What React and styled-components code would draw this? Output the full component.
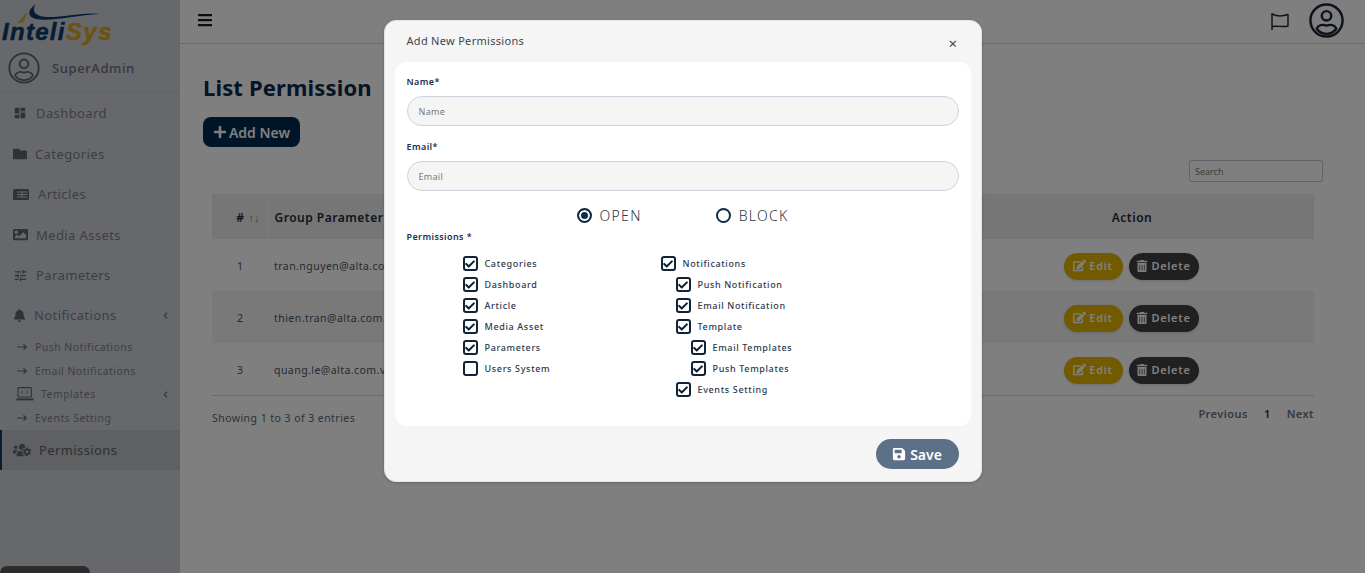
import React from "react";
import styled, { createGlobalStyle } from "styled-components";
import { FaBell, FaEdit, FaFolder, FaImage, FaPlus, FaSave, FaTrashAlt, FaUsersCog, FaBars, FaCheck, FaChevronLeft } from "react-icons/fa";
import { MdDashboard, MdTune } from "react-icons/md";
import { HiArrowNarrowRight } from "react-icons/hi";

const FONT = `"Noto Sans", "Open Sans", sans-serif`;

const GlobalStyle = createGlobalStyle`
    html, body {
        margin: 0;
        height: 100%;
        overflow: hidden;
        background: #fff;
        font-family: ${FONT};
    }
    * {
        box-sizing: border-box;
    }
`;

const Page = styled.div`
    display: flex;
    height: 573px;
    width: 1365px;
    position: relative;
    overflow: hidden;
`;

const Sidebar = styled.aside`
    width: 180px;
    flex: none;
    background: #cdd1d8;
    display: flex;
    flex-direction: column;
`;

const LogoBox = styled.div`
    height: 43px;
    flex: none;
`;

const LogoSvg = styled.svg`
    display: block;
    overflow: visible;
`;

const UserRow = styled.div`
    height: 50px;
    display: flex;
    align-items: center;
    gap: 12px;
    padding-left: 8px;
    border-bottom: 1px solid #bfc3ca;
    font-size: 13px;
    font-weight: 500;
    letter-spacing: 0.6px;
    color: #6a6f78;
`;

const Nav = styled.nav`
    display: flex;
    flex-direction: column;
`;

const NavItem = styled.div`
    height: ${(p) => p.$h || 40.5}px;
    display: flex;
    align-items: center;
    gap: ${(p) => p.$gap || 8}px;
    padding-left: 13px;
    padding-right: 11px;
    font-size: 13px;
    letter-spacing: 0.4px;
    color: #7a7f88;
    svg {
        flex: none;
        color: #5f646c;
    }
`;

const SubItem = styled(NavItem)`
    height: 23.7px;
    padding-left: 16px;
    font-size: 10.5px;
    gap: 7px;
    letter-spacing: 0.45px;
`;

const ActiveItem = styled(NavItem)`
    height: 40px;
    background: #bcc0c7;
    border-left: 2px solid #0d3a66;
    padding-left: 11px;
    gap: 8px;
    color: #5c6068;
`;

const Chevron = styled(FaChevronLeft)`
    margin-left: auto;
    color: #5a5f66;
`;

const Main = styled.main`
    flex: 1;
    min-width: 0;
    display: flex;
    flex-direction: column;
`;

const TopBar = styled.header`
    height: 44px;
    flex: none;
    border-bottom: 1px solid #d5d5d5;
    display: flex;
    align-items: center;
    padding: 0 21px 3px 17px;
    color: #111c2a;
`;

const TopRight = styled.div`
    margin-left: auto;
    display: flex;
    align-items: center;
    gap: 20px;
`;

const FlagSvg = styled.svg`
    margin-top: 3px;
`;

const Content = styled.div`
    padding: 28px 51px 0 23px;
`;

const Title = styled.h1`
    margin: 0;
    font-size: 22px;
    line-height: 30px;
    font-weight: 700;
    letter-spacing: 0.15px;
    color: #0b2a4a;
`;

const AddButton = styled.button`
    margin-top: 15px;
    width: 97px;
    height: 30px;
    border: none;
    border-radius: 8px;
    background: #022a50;
    color: #fff;
    display: flex;
    align-items: center;
    justify-content: center;
    gap: 2px;
    font-family: ${FONT};
    font-size: 14px;
    font-weight: 600;
`;

const SearchRow = styled.div`
    display: flex;
    justify-content: flex-end;
    margin: 13px -9px 12px 0;
`;

const SearchInput = styled.input`
    width: 134px;
    height: 22px;
    border: 1px solid #c9c9c9;
    border-radius: 2px;
    background: transparent;
    padding: 0 5px;
    font-family: ${FONT};
    font-size: 9px;
    &::placeholder {
        color: #777;
    }
`;

const TableWrap = styled.div`
    margin-left: 9px;
`;

const Table = styled.table`
    width: 1102px;
    border-collapse: collapse;
    table-layout: fixed;
    font-size: 10.5px;
    letter-spacing: 0.45px;
    color: #4a5564;
`;

const Th = styled.th`
    height: 45px;
    background: #ededed;
    border-bottom: 1px solid #fff;
    border-right: ${(p) => (p.$divider ? "1px solid #f4f4f4" : "none")};
    font-size: 12px;
    font-weight: 600;
    letter-spacing: 0.5px;
    color: #1d2a3d;
    text-align: ${(p) => p.$align || "left"};
    padding: 3px 7px 0;
    white-space: nowrap;
    overflow: hidden;
`;

const SortArrows = styled.span`
    color: #8a8f96;
    font-weight: 400;
    font-size: 11px;
    letter-spacing: 0;
    margin-left: 4px;
`;

const Tr = styled.tr`
    background: ${(p) => (p.$striped ? "#f2f2f2" : "transparent")};
`;

const Td = styled.td`
    height: 52px;
    padding: 1px 7px 0;
    text-align: ${(p) => p.$align || "left"};
    white-space: nowrap;
    overflow: hidden;
`;

const IdCell = styled(Td)`
    padding-left: 25px;
`;

const TableFoot = styled.div`
    border-top: 1px solid #d4d4d4;
    display: flex;
    justify-content: space-between;
    padding-top: 15px;
    font-size: 10.5px;
    letter-spacing: 0.45px;
    color: #5a6270;
`;

const Pager = styled.div`
    display: flex;
    gap: 16px;
    font-size: 11px;
    font-weight: 600;
    letter-spacing: 0.45px;
    color: #6a7484;
    margin-top: -5px;
`;

const PagerCurrent = styled.span`
    color: #2a2f3a;
`;

const ActionGroup = styled.div`
    display: inline-flex;
    gap: 6px;
    margin: 1px 0 0 -2px;
`;

const PillButton = styled.button`
    height: 27px;
    width: ${(p) => p.$w}px;
    border: none;
    border-radius: 14px;
    background: ${(p) => p.$bg};
    color: #fff;
    display: flex;
    align-items: center;
    justify-content: center;
    gap: 3px;
    padding: 0 0 1px;
    font-family: ${FONT};
    font-size: 11px;
    font-weight: 600;
    letter-spacing: 0.7px;
    box-shadow: 0 1px 3px rgba(0, 0, 0, 0.15);
`;

const Overlay = styled.div`
    position: absolute;
    inset: 0;
    background: rgba(0, 0, 0, 0.5);
    display: flex;
    justify-content: center;
    align-items: flex-start;
    padding-top: 20px;
`;

const Toast = styled.div`
    position: absolute;
    left: 0;
    bottom: 0;
    width: 90px;
    height: 7px;
    border-radius: 8px 8px 0 0;
    background: #2c2c2c;
`;

const Modal = styled.div`
    width: 598px;
    height: 462px;
    background: #f5f5f5;
    border: 1px solid #e3e3e3;
    border-radius: 12px;
    box-shadow: 0 1px 3px rgba(0, 0, 0, 0.2);
    display: flex;
    flex-direction: column;
    padding: 0 10px;
`;

const ModalHead = styled.div`
    height: 41px;
    flex: none;
    display: flex;
    align-items: center;
    justify-content: space-between;
    padding: 0 12px 3px;
    font-size: 11px;
    letter-spacing: 0.3px;
    color: #3e4650;
`;

const CloseMark = styled.span`
    font-size: 15px;
    line-height: 15px;
    color: #444;
    margin: 7px 1px 0 0;
`;

const ModalBody = styled.div`
    height: 364px;
    flex: none;
    background: #fff;
    border-radius: 12px;
    padding: 14px 12px 0;
`;

const Label = styled.div`
    font-size: 9px;
    line-height: 12px;
    font-weight: 600;
    letter-spacing: 0.4px;
    color: #17324f;
`;

const FieldInput = styled.input`
    display: block;
    width: 552px;
    height: 30px;
    margin: 8px 0 15px;
    border: 1px solid #cdd2dc;
    border-radius: 15px;
    background: #f5f5f5;
    padding: 0 11px;
    font-family: ${FONT};
    font-size: 9px;
    letter-spacing: 0.3px;
    &::placeholder {
        color: #777;
    }
`;

const RadioRow = styled.div`
    display: flex;
    margin: -3px 0 0 170px;
    height: 24px;
    align-items: center;
    gap: 74px;
`;

const Radio = styled.div`
    display: flex;
    align-items: center;
    gap: 8px;
    font-size: 14px;
    font-weight: 300;
    letter-spacing: 1.3px;
    color: #2c3744;
`;

const RadioDot = styled.span`
    width: 15px;
    height: 15px;
    border-radius: 50%;
    border: 2px solid #132c41;
    background: ${(p) => (p.$on ? "#132c41" : "#fff")};
    box-shadow: ${(p) => (p.$on ? "inset 0 0 0 2px #fff" : "none")};
`;

const PermLabel = styled(Label)`
    margin-top: 4px;
`;

const PermGrid = styled.div`
    display: grid;
    grid-template-columns: 198px 1fr;
    margin: 10px 0 0 56px;
`;

const PermCol = styled.div`
    display: flex;
    flex-direction: column;
`;

const CheckRow = styled.div`
    height: 21px;
    display: flex;
    align-items: center;
    gap: 7px;
    padding-left: ${(p) => (p.$level || 0) * 15}px;
    font-size: 9px;
    font-weight: 500;
    letter-spacing: 0.65px;
    color: #2c3a4a;
`;

const CheckBox = styled.span`
    width: 15px;
    height: 15px;
    flex: none;
    border: 2px solid #0f2436;
    border-radius: 3px;
    display: flex;
    align-items: center;
    justify-content: center;
    color: #0d1e2d;
`;

const ModalFoot = styled.div`
    flex: 1;
    display: flex;
    justify-content: flex-end;
    align-items: flex-start;
    padding: 13px 12px 0 0;
`;

const SaveButton = styled.button`
    width: 83px;
    height: 30px;
    border: none;
    border-radius: 15px;
    background: #5c7088;
    color: #fff;
    display: flex;
    align-items: center;
    justify-content: center;
    gap: 4px;
    font-family: ${FONT};
    font-size: 14px;
    font-weight: 600;
`;

const Logo = () => (
    <LogoSvg width="120" height="43" viewBox="0 0 120 43">
        <path d="M17 23 L27 12 L24 22 Z" fill="#d4a820" opacity="0.9" />
        <path d="M36 4 C27 10 27 17 36 19 C50 22 76 15 100 14 C84 11 54 20 40 16 C34 14 32 9 36 4 Z" fill="#0d3a66" />
        <text x="2" y="40" fontFamily="Liberation Sans, sans-serif" fontSize="24" fontWeight="700" fontStyle="italic" strokeWidth="0.5">
            <tspan fill="#0d3a66" stroke="#0d3a66" letterSpacing="1.3">Inteli</tspan>
            <tspan fill="#d4a820" stroke="#d4a820" letterSpacing="1.5">Sys</tspan>
        </text>
    </LogoSvg>
);

const Avatar = ({ size, color, width = 2 }) => (
    <svg width={size} height={size} viewBox="0 0 34 34" fill="none" stroke={color} strokeWidth={width}>
        <circle cx="17" cy="17" r="15.6" />
        <circle cx="17" cy="12.5" r="4.6" />
        <path d="M7.5 25 C9 21.5 13 20.5 17 22 C21 20.5 25 21.5 26.5 25 C24 28.5 20.5 30 17 30 C13.5 30 10 28.5 7.5 25 Z" />
    </svg>
);

const FlagIcon = () => (
    <FlagSvg width="19" height="20" viewBox="0 0 19 20" fill="none" stroke="#1d2733" strokeWidth="1.4" strokeLinejoin="round">
        <path d="M2 1 V18" />
        <path d="M2 2 C6 4 11 5 18 2.5 V14 C12 15.5 8 13.5 2 14.5" />
    </FlagSvg>
);

const ArticleIcon = () => (
    <svg width="16" height="11" viewBox="0 0 16 11">
        <rect width="16" height="11" rx="1.5" fill="#5f646c" />
        <path d="M4 3 H14.5 M4 5.5 H14.5 M4 8 H14.5 M9 3 V8.5" stroke="#cdd1d8" strokeWidth="1" />
    </svg>
);

const LaptopIcon = () => (
    <svg width="18" height="14" viewBox="0 0 18 14" fill="none" stroke="#5f646c" strokeWidth="1.1">
        <rect x="2" y="0.6" width="13.5" height="9.4" rx="1" />
        <path d="M0.5 12.4 H17.5" strokeWidth="2" />
        <path d="M7 3.6 L5.4 5.2 L7 6.8 M10.5 3.6 L12.1 5.2 L10.5 6.8" strokeWidth="0.9" />
    </svg>
);

const CheckItem = ({ label, level, on = true }) => (
    <CheckRow $level={level}>
        <CheckBox>{on && <FaCheck size={10} />}</CheckBox>
        {label}
    </CheckRow>
);

const rows = [
    { id: 1, email: "tran.nguyen@alta.com.vn" },
    { id: 2, email: "thien.tran@alta.com.vn" },
    { id: 3, email: "quang.le@alta.com.vn" },
];

const App = () => {
    return (
        <Page>
            <GlobalStyle />
            <Sidebar>
                <LogoBox>
                    <Logo />
                </LogoBox>
                <UserRow>
                    <Avatar size={32} color="#5f646c" />
                    SuperAdmin
                </UserRow>
                <Nav>
                    <NavItem $gap={9} $h={40.5}>
                        <MdDashboard size={14} />
                        Dashboard
                    </NavItem>
                    <NavItem>
                        <FaFolder size={14} />
                        Categories
                    </NavItem>
                    <NavItem $gap={9}>
                        <ArticleIcon />
                        Articles
                    </NavItem>
                    <NavItem>
                        <FaImage size={15} />
                        Media Assets
                    </NavItem>
                    <NavItem>
                        <MdTune size={15} />
                        Parameters
                    </NavItem>
                    <NavItem $h={39.5} $gap={8}>
                        <FaBell size={13} />
                        Notifications
                        <Chevron size={7} />
                    </NavItem>
                    <SubItem>
                        <HiArrowNarrowRight size={12} />
                        Push Notifications
                    </SubItem>
                    <SubItem>
                        <HiArrowNarrowRight size={12} />
                        Email Notifications
                    </SubItem>
                    <SubItem>
                        <LaptopIcon />
                        Templates
                        <Chevron size={7} />
                    </SubItem>
                    <SubItem>
                        <HiArrowNarrowRight size={12} />
                        Events Setting
                    </SubItem>
                    <ActiveItem>
                        <FaUsersCog size={18} />
                        Permissions
                    </ActiveItem>
                </Nav>
            </Sidebar>
            <Main>
                <TopBar>
                    <FaBars size={16} />
                    <TopRight>
                        <FlagIcon />
                        <Avatar size={35} color="#1d2733" width={2.4} />
                    </TopRight>
                </TopBar>
                <Content>
                    <Title>List Permission</Title>
                    <AddButton>
                        <FaPlus size={14} />
                        Add New
                    </AddButton>
                    <SearchRow>
                        <SearchInput placeholder="Search" />
                    </SearchRow>
                    <TableWrap>
                        <Table>
                            <colgroup>
                                <col width="55" />
                                <col width="683" />
                                <col width="364" />
                            </colgroup>
                            <thead>
                                <tr>
                                    <Th $divider $align="right">
                                        #<SortArrows>↑↓</SortArrows>
                                    </Th>
                                    <Th>Group Parameter</Th>
                                    <Th $align="center">Action</Th>
                                </tr>
                            </thead>
                            <tbody>
                                {rows.map((r, i) => (
                                    <Tr key={r.id} $striped={i === 1}>
                                        <IdCell>{r.id}</IdCell>
                                        <Td>{r.email}</Td>
                                        <Td $align="center">
                                            <ActionGroup>
                                                <PillButton $w={59} $bg="#e5b400">
                                                    <FaEdit size={13} />
                                                    Edit
                                                </PillButton>
                                                <PillButton $w={70} $bg="#423f42">
                                                    <FaTrashAlt size={12} />
                                                    Delete
                                                </PillButton>
                                            </ActionGroup>
                                        </Td>
                                    </Tr>
                                ))}
                            </tbody>
                        </Table>
                        <TableFoot>
                            <span>Showing 1 to 3 of 3 entries</span>
                            <Pager>
                                <span>Previous</span>
                                <PagerCurrent>1</PagerCurrent>
                                <span>Next</span>
                            </Pager>
                        </TableFoot>
                    </TableWrap>
                </Content>
            </Main>
            <Overlay>
                <Modal>
                    <ModalHead>
                        Add New Permissions
                        <CloseMark>×</CloseMark>
                    </ModalHead>
                    <ModalBody>
                        <Label>Name*</Label>
                        <FieldInput placeholder="Name" />
                        <Label>Email*</Label>
                        <FieldInput placeholder="Email" />
                        <RadioRow>
                            <Radio>
                                <RadioDot $on />
                                OPEN
                            </Radio>
                            <Radio>
                                <RadioDot />
                                BLOCK
                            </Radio>
                        </RadioRow>
                        <PermLabel>Permissions *</PermLabel>
                        <PermGrid>
                            <PermCol>
                                <CheckItem label="Categories" />
                                <CheckItem label="Dashboard" />
                                <CheckItem label="Article" />
                                <CheckItem label="Media Asset" />
                                <CheckItem label="Parameters" />
                                <CheckItem label="Users System" on={false} />
                            </PermCol>
                            <PermCol>
                                <CheckItem label="Notifications" />
                                <CheckItem label="Push Notification" level={1} />
                                <CheckItem label="Email Notification" level={1} />
                                <CheckItem label="Template" level={1} />
                                <CheckItem label="Email Templates" level={2} />
                                <CheckItem label="Push Templates" level={2} />
                                <CheckItem label="Events Setting" level={1} />
                            </PermCol>
                        </PermGrid>
                    </ModalBody>
                    <ModalFoot>
                        <SaveButton>
                            <FaSave size={14} />
                            Save
                        </SaveButton>
                    </ModalFoot>
                </Modal>
                <Toast />
            </Overlay>
        </Page>
    );
};

export default App;
